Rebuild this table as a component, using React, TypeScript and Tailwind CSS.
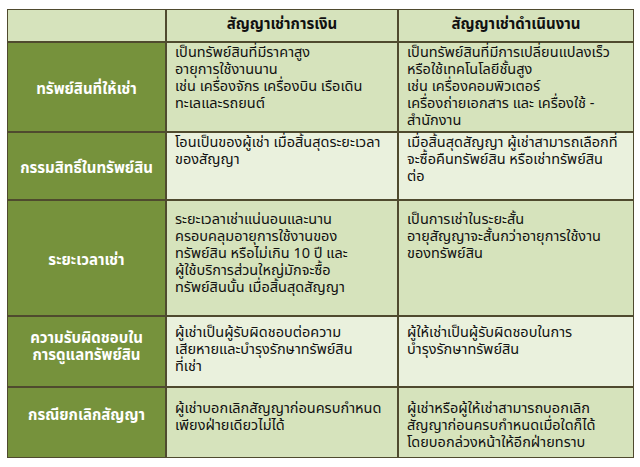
import React from "react";

const font = { fontFamily: "Tahoma, 'Noto Sans Thai', 'Noto Sans', 'DejaVu Sans', sans-serif" };

type Row = {
  label: string[];
  a: string[];
  b: string[];
  h: string;
  pt: string;
  lpb: string;
  dark: boolean;
};

const rows: Row[] = [
  {
    label: ["ทรัพย์สินที่ให้เช่า"],
    a: ["เป็นทรัพย์สินที่มีราคาสูง", "อายุการใช้งานนาน", "เช่น เครื่องจักร เครื่องบิน เรือเดิน", "ทะเลและรถยนต์"],
    b: ["เป็นทรัพย์สินที่มีการเปลี่ยนแปลงเร็ว", "หรือใช้เทคโนโลยีชั้นสูง", "เช่น เครื่องคอมพิวเตอร์", "เครื่องถ่ายเอกสาร และ เครื่องใช้ -", "สำนักงาน"],
    h: "h-[88px]",
    pt: "pt-[2px]",
    lpb: "pb-0",
    dark: true,
  },
  {
    label: ["กรรมสิทธิ์ในทรัพย์สิน"],
    a: ["โอนเป็นของผู้เช่า เมื่อสิ้นสุดระยะเวลา", "ของสัญญา"],
    b: ["เมื่อสิ้นสุดสัญญา ผู้เช่าสามารถเลือกที่", "จะซื้อคืนทรัพย์สิน หรือเช่าทรัพย์สิน", "ต่อ"],
    h: "h-[66px]",
    pt: "pt-[2px]",
    lpb: "pb-0",
    dark: false,
  },
  {
    label: ["ระยะเวลาเช่า"],
    a: ["ระยะเวลาเช่าแน่นอนและนาน", "ครอบคลุมอายุการใช้งานของ", "ทรัพย์สิน หรือไม่เกิน 10 ปี และ", "ผู้ใช้บริการส่วนใหญ่มักจะซื้อ", "ทรัพย์สินนั้น เมื่อสิ้นสุดสัญญา"],
    b: ["เป็นการเช่าในระยะสั้น", "อายุสัญญาจะสั้นกว่าอายุการใช้งาน", "ของทรัพย์สิน"],
    h: "h-[114px]",
    pt: "pt-[11px]",
    lpb: "pb-0",
    dark: true,
  },
  {
    label: ["ความรับผิดชอบใน", "การดูแลทรัพย์สิน"],
    a: ["ผู้เช่าเป็นผู้รับผิดชอบต่อความ", "เสียหายและบำรุงรักษาทรัพย์สิน", "ที่เช่า"],
    b: ["ผู้ให้เช่าเป็นผู้รับผิดชอบในการ", "บำรุงรักษาทรัพย์สิน"],
    h: "h-[69px]",
    pt: "pt-[8px]",
    lpb: "pb-[14px]",
    dark: false,
  },
  {
    label: ["กรณียกเลิกสัญญา"],
    a: ["ผู้เช่าบอกเลิกสัญญาก่อนครบกำหนด", "เพียงฝ่ายเดียวไม่ได้"],
    b: ["ผู้เช่าหรือผู้ให้เช่าสามารถบอกเลิก", "สัญญาก่อนครบกำหนดเมื่อใดก็ได้", "โดยบอกล่วงหน้าให้อีกฝ่ายทราบ"],
    h: "h-[69px]",
    pt: "pt-[13px]",
    lpb: "pb-[19px]",
    dark: true,
  },
];

function Lines({ lines }: { lines: string[] }) {
  return (
    <>
      {lines.map((l, i) => (
        <div key={i} className="whitespace-nowrap h-[17px]">
          {l}
        </div>
      ))}
    </>
  );
}

export default function App() {
  return (
    <div className="w-[640px] h-[467px] bg-white pt-[9px] pl-[7px]" style={font}>
      <div className="w-[627px] bg-[#4f4a2e] p-px grid grid-cols-[157px_230px_234px] gap-[2px] text-[14.5px] leading-[17px] text-[#111]">
        <div className="h-[31px] bg-[#d6e3bc]" />
        <div className="h-[31px] bg-[#d6e3bc] font-bold text-[15px] text-center pt-[6px]">สัญญาเช่าการเงิน</div>
        <div className="h-[31px] bg-[#d6e3bc] font-bold text-[15px] text-center pt-[6px]">สัญญาเช่าดำเนินงาน</div>
        {rows.map((r, i) => (
          <React.Fragment key={i}>
            <div className={`${r.h} ${r.lpb} pt-[4px] bg-[#76923c] text-white font-bold text-[15px] flex flex-col items-center justify-center text-center`}>
              <Lines lines={r.label} />
            </div>
            <div className={`${r.h} ${r.pt} pl-2 ${r.dark ? "bg-[#d6e3bc]" : "bg-[#eaf1dd]"}`}>
              <Lines lines={r.a} />
            </div>
            <div className={`${r.h} ${r.pt} pl-2 ${r.dark ? "bg-[#d6e3bc]" : "bg-[#eaf1dd]"}`}>
              <Lines lines={r.b} />
            </div>
          </React.Fragment>
        ))}
      </div>
    </div>
  );
}
